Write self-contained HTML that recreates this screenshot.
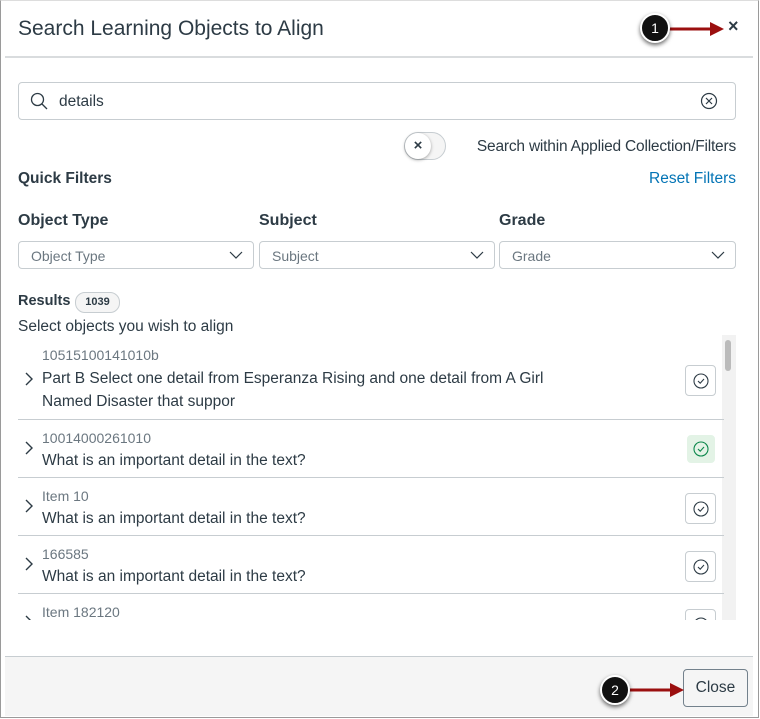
<!DOCTYPE html>
<html><head><meta charset="utf-8"><style>
*{box-sizing:border-box;margin:0;padding:0}
body{width:760px;height:719px;background:#fff;font-family:"Liberation Sans",sans-serif;color:#2d3b45;position:relative;overflow:hidden}
.a{position:absolute;white-space:nowrap}
.frame{position:absolute;left:0;top:0;width:759px;height:718px;border:1px solid #9a9a9a;border-top-color:#ddd}
.box{position:absolute;border:1px solid #c7cdd1;border-radius:4px;background:#fff}
.sel{position:absolute;top:241px;height:28px;border:1px solid #c7cdd1;border-radius:4px;font-size:14px;color:#6b7780;padding:6px 12px}
.sel svg{position:absolute;right:10px;top:8px}
.lbl{position:absolute;top:212px;font-size:16px;font-weight:bold}
.id{position:absolute;left:42px;font-size:14px;color:#6b7780}
.tx{position:absolute;left:42px;font-size:15.5px;color:#2d3b45}
.chev{position:absolute;left:24px}
.chk{position:absolute;left:685px;width:31px;height:31px;border:1px solid #c7cdd1;border-radius:4px;background:#fff}
.chk svg{position:absolute;left:7px;top:7px}
.div{position:absolute;left:18px;width:706px;height:1px;background:#c7cdd1}
.dot{position:absolute;width:30px;height:30px;border-radius:50%;background:#111;border:2px solid #fff;box-shadow:0 2px 4px rgba(0,0,0,.6);color:#fff;font-size:14px;text-align:center;line-height:26px}
</style></head><body>
<div class="frame"></div>
<div class="a" style="left:18px;top:17px;font-size:21px;color:#2d3b45">Search Learning Objects to Align</div>
<div class="a" style="left:728px;top:16px;font-size:18px;font-weight:bold">×</div>
<div class="a" style="left:5px;top:56px;width:748px;height:2px;background:#d9dcde"></div>

<div class="box" style="left:18px;top:82px;width:718px;height:38px"></div>
<svg class="a" style="left:30px;top:92px" width="18" height="18" viewBox="0 0 18 18"><circle cx="7.5" cy="7.5" r="6" fill="none" stroke="#2d3b45" stroke-width="1.3"/><line x1="12" y1="12" x2="17" y2="17" stroke="#2d3b45" stroke-width="1.3"/></svg>
<div class="a" style="left:59px;top:93px;font-size:15.5px">details</div>
<svg class="a" style="left:700px;top:92px" width="18" height="18" viewBox="0 0 18 18"><circle cx="9" cy="9" r="7.5" fill="none" stroke="#2d3b45" stroke-width="1.2"/><path d="M6 6L12 12M12 6L6 12" stroke="#2d3b45" stroke-width="1.2"/></svg>

<div class="a" style="left:404px;top:132px;width:42px;height:28px;border-radius:14px;background:#f5f5f5;border:1px solid #c7cdd1"></div>
<div class="a" style="left:405px;top:133px;width:26px;height:26px;border-radius:50%;background:#fff;box-shadow:0 1px 3px rgba(0,0,0,.35);text-align:center;font-size:15px;font-weight:bold;line-height:25px">×</div>
<div class="a" style="right:24px;top:138px;font-size:15.5px;letter-spacing:-0.2px">Search within Applied Collection/Filters</div>

<div class="a" style="left:18px;top:170px;font-size:15.5px;font-weight:bold">Quick Filters</div>
<div class="a" style="right:24px;top:170px;font-size:15.5px;color:#0374b5">Reset Filters</div>

<div class="lbl" style="left:18px">Object Type</div>
<div class="lbl" style="left:259px">Subject</div>
<div class="lbl" style="left:499px">Grade</div>
<div class="sel" style="left:18px;width:236px">Object Type<svg width="14" height="10" viewBox="0 0 14 10"><path d="M1 2L7 8L13 2" fill="none" stroke="#2d3b45" stroke-width="1.2"/></svg></div>
<div class="sel" style="left:259px;width:236px">Subject<svg width="14" height="10" viewBox="0 0 14 10"><path d="M1 2L7 8L13 2" fill="none" stroke="#2d3b45" stroke-width="1.2"/></svg></div>
<div class="sel" style="left:499px;width:237px">Grade<svg width="14" height="10" viewBox="0 0 14 10"><path d="M1 2L7 8L13 2" fill="none" stroke="#2d3b45" stroke-width="1.2"/></svg></div>

<div class="a" style="left:18px;top:293px;font-size:14.5px;font-weight:bold">Results</div>
<div class="a" style="left:75px;top:292px;width:45px;height:21px;border:1px solid #c7cdd1;border-radius:10px;background:#f5f5f5;font-size:11px;font-weight:bold;text-align:center;line-height:19px">1039</div>
<div class="a" style="left:18px;top:318px;font-size:15.5px">Select objects you wish to align</div>

<div class="a" style="left:18px;top:335px;width:718px;height:285px;overflow:hidden">
 <div class="a" style="left:704px;top:0;width:14px;height:285px;background:#f2f2f2"></div>
 <div class="a" style="left:707px;top:5px;width:6px;height:31px;border-radius:3px;background:#bbb"></div>
</div>
<div class="a" style="left:0;top:335px;width:760px;height:285px;overflow:hidden">
 <div class="id" style="top:12px">10515100141010b</div>
 <svg class="chev" style="top:37px" width="10" height="14" viewBox="0 0 10 14"><path d="M2 1L8 7L2 13" fill="none" stroke="#2d3b45" stroke-width="1.4"/></svg>
 <div class="tx" style="top:35px">Part B Select one detail from Esperanza Rising and one detail from A Girl</div>
 <div class="tx" style="top:58px">Named Disaster that suppor</div>
 <div class="chk" style="top:30px"><svg width="16" height="16" viewBox="0 0 16 16"><circle cx="8" cy="8" r="7" fill="none" stroke="#2d3b45" stroke-width="1.1"/><path d="M5 8L7.2 10.2L11 6" fill="none" stroke="#2d3b45" stroke-width="1.1"/></svg></div>
 <div class="div" style="top:84px"></div>

 <div class="id" style="top:95px">10014000261010</div>
 <svg class="chev" style="top:106px" width="10" height="14" viewBox="0 0 10 14"><path d="M2 1L8 7L2 13" fill="none" stroke="#2d3b45" stroke-width="1.4"/></svg>
 <div class="tx" style="top:117px">What is an important detail in the text?</div>
 <div class="chk" style="top:100px;left:687px;width:28px;height:28px;background:#e3f3e6;border-color:#e3f3e6"><svg style="left:5px;top:5px" width="16" height="16" viewBox="0 0 16 16"><circle cx="8" cy="8" r="7" fill="none" stroke="#0b874b" stroke-width="1.1"/><path d="M5 8L7.2 10.2L11 6" fill="none" stroke="#0b874b" stroke-width="1.1"/></svg></div>
 <div class="div" style="top:142px"></div>

 <div class="id" style="top:153px">Item 10</div>
 <svg class="chev" style="top:164px" width="10" height="14" viewBox="0 0 10 14"><path d="M2 1L8 7L2 13" fill="none" stroke="#2d3b45" stroke-width="1.4"/></svg>
 <div class="tx" style="top:175px">What is an important detail in the text?</div>
 <div class="chk" style="top:158px"><svg width="16" height="16" viewBox="0 0 16 16"><circle cx="8" cy="8" r="7" fill="none" stroke="#2d3b45" stroke-width="1.1"/><path d="M5 8L7.2 10.2L11 6" fill="none" stroke="#2d3b45" stroke-width="1.1"/></svg></div>
 <div class="div" style="top:200px"></div>

 <div class="id" style="top:211px">166585</div>
 <svg class="chev" style="top:222px" width="10" height="14" viewBox="0 0 10 14"><path d="M2 1L8 7L2 13" fill="none" stroke="#2d3b45" stroke-width="1.4"/></svg>
 <div class="tx" style="top:233px">What is an important detail in the text?</div>
 <div class="chk" style="top:216px"><svg width="16" height="16" viewBox="0 0 16 16"><circle cx="8" cy="8" r="7" fill="none" stroke="#2d3b45" stroke-width="1.1"/><path d="M5 8L7.2 10.2L11 6" fill="none" stroke="#2d3b45" stroke-width="1.1"/></svg></div>
 <div class="div" style="top:258px"></div>

 <div class="id" style="top:269px">Item 182120</div>
 <svg class="chev" style="top:280px" width="10" height="14" viewBox="0 0 10 14"><path d="M2 1L8 7L2 13" fill="none" stroke="#2d3b45" stroke-width="1.4"/></svg>
 <div class="chk" style="top:274px"><svg width="16" height="16" viewBox="0 0 16 16"><circle cx="8" cy="8" r="7" fill="none" stroke="#2d3b45" stroke-width="1.1"/></svg></div>
</div>

<div class="a" style="left:5px;top:656px;width:748px;height:60px;background:#f5f5f5;border-top:1px solid #c7cdd1"></div>
<div class="a" style="left:683px;top:669px;width:65px;height:38px;border:1px solid #73818c;border-radius:4px;background:#f5f5f5;font-size:15.5px;text-align:center;line-height:36px">Close</div>

<svg class="a" style="left:668px;top:20px" width="60" height="18" viewBox="0 0 60 18"><line x1="0" y1="9" x2="44" y2="9" stroke="#9b0f0f" stroke-width="3"/><path d="M42 2L56 9L42 16Z" fill="#9b0f0f"/></svg>
<div class="dot" style="left:640px;top:13px">1</div>
<svg class="a" style="left:628px;top:681px" width="58" height="18" viewBox="0 0 58 18"><line x1="0" y1="9" x2="44" y2="9" stroke="#9b0f0f" stroke-width="3"/><path d="M42 2L56 9L42 16Z" fill="#9b0f0f"/></svg>
<div class="dot" style="left:600px;top:675px">2</div>
</body></html>
